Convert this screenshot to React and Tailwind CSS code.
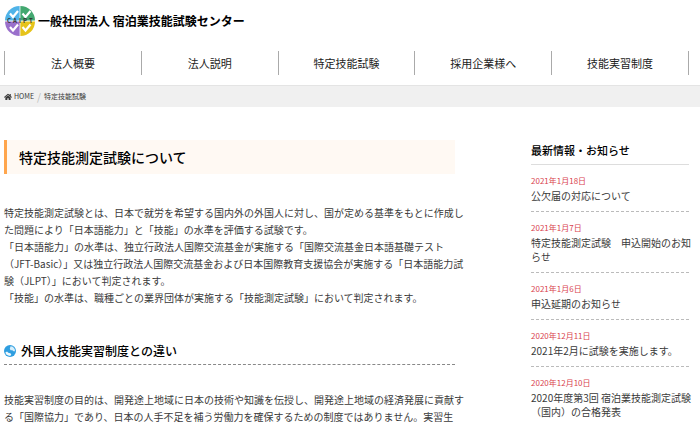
import { FaHome } from "react-icons/fa";

const navItems = ["法人概要", "法人説明", "特定技能試験", "採用企業様へ", "技能実習制度"];

const news = [
  { date: "2021年1月18日", lines: ["公欠届の対応について"] },
  { date: "2021年1月7日", lines: ["特定技能測定試験　申込開始のお知", "らせ"] },
  { date: "2021年1月6日", lines: ["申込延期のお知らせ"] },
  { date: "2020年12月11日", lines: ["2021年2月に試験を実施します。"] },
  { date: "2020年12月10日", lines: ["2020年度第3回 宿泊業技能測定試験", "（国内）の合格発表"] },
];

const intro = [
  "特定技能測定試験とは、日本で就労を希望する国内外の外国人に対し、国が定める基準をもとに作成し",
  "た問題により「日本語能力」と「技能」の水準を評価する試験です。",
  "「日本語能力」の水準は、独立行政法人国際交流基金が実施する「国際交流基金日本語基礎テスト",
  "（JFT-Basic）」又は独立行政法人国際交流基金および日本国際教育支援協会が実施する「日本語能力試",
  "験（JLPT）」において判定されます。",
  "「技能」の水準は、職種ごとの業界団体が実施する「技能測定試験」において判定されます。",
];

const difference = [
  "技能実習制度の目的は、開発途上地域に日本の技術や知識を伝授し、開発途上地域の経済発展に貢献す",
  "る「国際協力」であり、日本の人手不足を補う労働力を確保するための制度ではありません。実習生",
];

function Lines({ lines }) {
  return lines.map((line) => (
    <span key={line} className="block whitespace-nowrap">
      {line}
    </span>
  ));
}

function Logo() {
  return (
    <svg viewBox="0 0 30 30" className="size-[30px] shrink-0" aria-hidden="true">
      <path d="M14.600 14.600V0A14.600 14.600 0 0 0 0 14.600Z" fill="#4fb3e8" />
      <path d="M15.400 14.600V0A14.600 14.600 0 0 1 30 14.600Z" fill="#43a870" />
      <path d="M14.600 15.400V30A14.600 14.600 0 0 1 0 15.400Z" fill="#9a70cc" />
      <path d="M15.400 15.400V30A14.600 14.600 0 0 0 30 15.400Z" fill="#e6c31a" />
      <g fill="none" stroke="#fff" strokeWidth="2.200">
        <path d="M5 7.500l3 3.500L13 5" />
        <path d="M17.500 7.500l3 3.500L25.500 5" />
        <path d="M5 21l3 3.500L13 18.500" />
        <path d="M17.500 21l3 3.500L25.500 18.500" />
      </g>
      <text x="4 10 15 20 26" y="17" textAnchor="middle" fontSize="6" fontWeight="700" fill="#333">
        CAIPT
      </text>
    </svg>
  );
}

function Globe() {
  return (
    <svg viewBox="0 0 12 12" className="size-3 shrink-0" aria-hidden="true">
      <circle cx="6" cy="6" r="6" fill="#2f9ee0" />
      <path d="M6.500 1.300L8.800 1.700 10.700 3.900 11 6.300 9.500 6.200 8.300 5.200 6.600 5.300 5.800 3.800Z" fill="#d8effb" />
      <path d="M1.300 7.400L3 6.600 4.300 7.800 6.300 8.200 7.300 9.300 6.300 10.900 4.300 10.600 2.300 9.400Z" fill="#eef8fd" />
    </svg>
  );
}

export default function App() {
  return (
    <div className="h-screen overflow-hidden bg-white font-['Noto_Sans_CJK_JP',sans-serif] text-[10px] text-[#3a3a3a]">
      <header className="border-b border-[#e4e4e4] pr-[11px] pb-[10px] pl-1">
        <a href="#" className="flex h-[51px] items-start gap-[3px] pt-[6px] pl-px">
          <Logo />
          <span className="text-[12px] leading-[30px] font-bold text-black">
            一般社団法人 宿泊業技能試験センター
          </span>
        </a>
        <nav className="grid grid-cols-5 border-l border-[#aaa]">
          {navItems.map((item) => (
            <a
              key={item}
              href="#"
              className="border-r border-[#aaa] text-center text-[11px] leading-[24px] text-[#222]"
            >
              {item}
            </a>
          ))}
        </nav>
      </header>

      <nav className="flex h-[21px] items-center gap-[3px] bg-[#f0f0f0] pl-1 text-[7px]">
        <a href="#" className="flex items-center gap-[2px]">
          <FaHome className="size-2" />
          HOME
        </a>
        <span className="text-[10px] text-[#bbb]">/</span>
        <span>特定技能試験</span>
      </nav>

      <div className="flex gap-[76px] pt-[33px] pr-[11px] pl-1">
        <main className="min-w-0 flex-1">
          <h1 className="border-l-[3px] border-[#ffa64d] bg-[#fff9f3] pl-3 text-[14px] leading-[34px] font-medium text-black">
            特定技能測定試験について
          </h1>
          <p className="mt-[30px] leading-[17px]">
            <Lines lines={intro} />
          </p>
          <h2 className="mt-[35px] flex items-center gap-[5px] border-b border-dashed border-[#888] pb-[3px] text-[12px] leading-[20px] font-medium text-black">
            <Globe />
            外国人技能実習制度との違い
          </h2>
          <p className="mt-[26px] leading-[17px]">
            <Lines lines={difference} />
          </p>
        </main>

        <aside className="w-[158px] shrink-0">
          <h2 className="border-b border-[#ddd] pb-[4px] text-[11px] leading-[20px] font-medium text-black">
            最新情報・お知らせ
          </h2>
          <ul>
            {news.map((item) => (
              <li key={item.date} className="border-b border-dashed border-[#bbb] pt-[9px] pb-[8px]">
                <time className="block text-[8px] leading-[14px] text-[#d9434e]">{item.date}</time>
                <a href="#" className="mt-px block leading-[14px]">
                  <Lines lines={item.lines} />
                </a>
              </li>
            ))}
          </ul>
        </aside>
      </div>
    </div>
  );
}
